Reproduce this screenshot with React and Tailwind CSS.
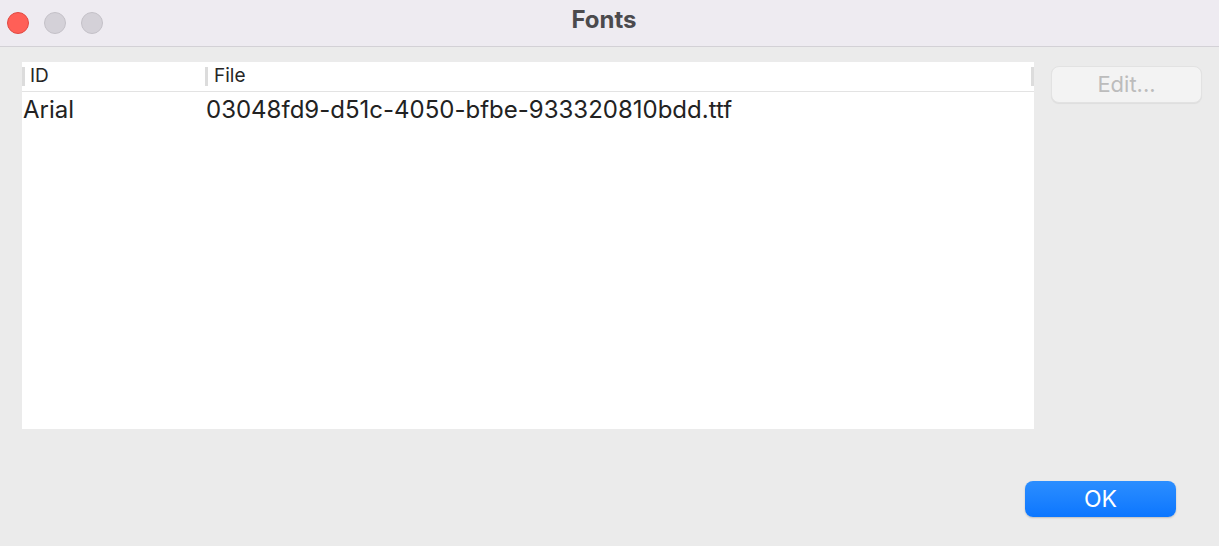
export default function App() {
  return (
    <div className="w-[1219px] h-[546px] flex flex-col bg-[#ebebeb] font-['Inter','Noto_Sans',sans-serif] overflow-hidden">
      {/* title bar */}
      <div className="h-[47px] flex items-center relative bg-[#eeebf1] border-b border-[#d3d1d6]">
        <div className="flex items-center gap-[15px] pl-[7px]">
          <div className="w-[22px] h-[22px] rounded-full bg-[#ff5f57] border border-[#e14942]" />
          <div className="w-[22px] h-[22px] rounded-full bg-[#d4d1d8] border border-[#c4c1c8]" />
          <div className="w-[22px] h-[22px] rounded-full bg-[#d4d1d8] border border-[#c4c1c8]" />
        </div>
        <div className="flex-1 text-center pr-[114px] text-[24px] font-bold text-[#4b4a4d] -mt-[7px]">Fonts</div>
      </div>

      {/* body */}
      <div className="flex-1 flex flex-col pt-[15px] pl-[22px] pr-[17px]">
        <div className="flex items-start">
          <div className="w-[1012px] h-[367px] bg-white flex flex-col">
            <div className="h-[30px] flex items-center border-b border-[#e3e3e3] text-[19px] text-[#262626]">
              <div className="w-[183px] flex items-center h-full">
                <div className="w-[3px] h-[19px] bg-[#dcdcdc]" />
                <span className="pl-[5px]">ID</span>
              </div>
              <div className="flex-1 flex items-center h-full">
                <div className="w-[3px] h-[19px] bg-[#dcdcdc]" />
                <span className="pl-[6px]">File</span>
              </div>
              <div className="w-[3px] h-[19px] bg-[#dcdcdc]" />
            </div>
            <div className="h-[36px] flex items-center text-[24px] text-[#222]">
              <span className="w-[184px] pl-[1px]">Arial</span>
              <span>03048fd9-d51c-4050-bfbe-933320810bdd.ttf</span>
            </div>
          </div>
          <button className="ml-[17px] mt-[4px] w-[151px] h-[37px] rounded-[8px] bg-[#f3f3f3] border border-[#e2e2e2] shadow-[0_1px_1px_rgba(0,0,0,0.06)] text-[22px] text-[#bcbcbc]">
            Edit...
          </button>
        </div>
        <div className="flex-1" />
        <div className="flex justify-end pr-[26px] pb-[29px]">
          <button className="w-[151px] h-[36px] rounded-[8px] bg-gradient-to-b from-[#2b8eff] to-[#0a76ff] shadow-[0_1px_2px_rgba(0,0,0,0.2)] text-[23px] text-white">
            OK
          </button>
        </div>
      </div>
    </div>
  )
}
